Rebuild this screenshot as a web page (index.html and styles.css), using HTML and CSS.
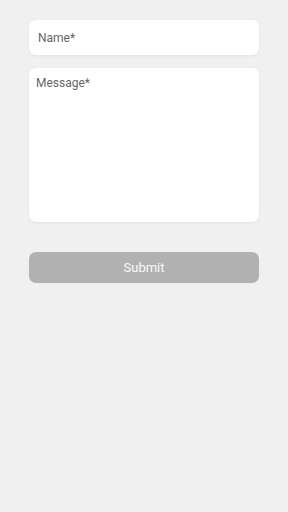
FILE: index.html
```html
<!DOCTYPE html>
<html lang="en">
<head>
    <meta charset="UTF-8">
    <meta name="viewport" content="width=device-width, initial-scale=1.0">
    <title>Contact</title>
    <link rel="stylesheet" href="styles.css">
</head>
<body>
    <form class="form">
        <input class="field" type="text" placeholder="Name*">
        <textarea class="field message" placeholder="Message*"></textarea>
        <button class="submit" type="button" disabled>Submit</button>
    </form>
</body>
</html>
```
FILE: styles.css
```css
body {
    margin: 0;
    background-color: #f0f0f0;
    font-family: Roboto, "Liberation Sans", sans-serif;
}

.form {
    display: flex;
    flex-direction: column;
    padding: 20px 29px;
}

.field {
    box-sizing: border-box;
    width: 100%;
    height: 35px;
    margin: 0;
    padding: 0 9px;
    border: none;
    border-radius: 7px;
    background-color: #fff;
    box-shadow: 0 1px 3px rgba(0, 0, 0, 0.06);
    font-family: inherit;
    font-size: 12px;
    color: #555;
    outline: none;
}

.field::placeholder {
    color: #666;
}

.message {
    height: 154px;
    margin-top: 13px;
    padding: 8px 7px;
    resize: none;
    line-height: 14px;
}

.submit {
    height: 31px;
    margin-top: 30px;
    border: none;
    border-radius: 7px;
    background-color: #b1b1b1;
    color: #fafafa;
    font-family: inherit;
    font-size: 13px;
}
```
